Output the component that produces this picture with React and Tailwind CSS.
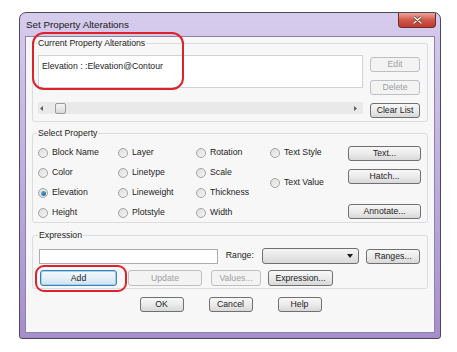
import React from "react";

const Btn = ({ children, disabled = false, focused = false, className = "" }) => {
    let look = "border-[#707070] bg-gradient-to-b from-[#f7f7f7] via-[#ebebeb] to-[#d8d8d8] text-[#1c1c1c]";
    if (disabled) look = "border-[#bcc0c3] bg-[#f3f3f3] text-[#a0a0a0]";
    if (focused) look = "border-[#3b80b6] bg-gradient-to-b from-[#f4f9fc] via-[#e4eff7] to-[#cfe2ef] text-[#1c1c1c] shadow-[inset_0_0_0_1px_#9fd3f1]";
    return (
        <div className={`flex h-[15px] shrink-0 items-center justify-center rounded-[3px] border leading-none ${look} ${className}`}>
            {children}
        </div>
    );
};

const Radio = ({ label, checked = false, className = "" }) => (
    <div className={`flex items-center gap-[4px] ${className}`}>
        <div className="flex h-[10px] w-[10px] shrink-0 items-center justify-center rounded-full border border-[#a3a3a3] bg-gradient-to-br from-[#dcdcdc] to-[#f6f6f6]">
            {checked && <div className="h-[5px] w-[5px] rounded-full bg-gradient-to-br from-[#6fb4e3] to-[#1d5a8c]" />}
        </div>
        <span className="whitespace-nowrap">{label}</span>
    </div>
);

const Group = ({ title, className = "", children }) => (
    <fieldset className={`min-w-0 rounded-[3px] border border-[#d9dde2] ${className}`}>
        <legend className="ml-[-1px] px-[1px] leading-[10px] text-[#1c1c1c]">{title}</legend>
        {children}
    </fieldset>
);

const Arrow = ({ dir }) => (
    <svg width="3" height="5" viewBox="0 0 3 5" className="shrink-0">
        {dir === "left" ? <polygon points="3,0 3,5 0,2.5" fill="#606060" /> : <polygon points="0,0 0,5 3,2.5" fill="#606060" />}
    </svg>
);

export default function App() {
    return (
        <div className="relative h-[352px] w-[457px] overflow-hidden bg-white font-['Liberation_Sans',Arial,sans-serif] text-[8.7px] text-[#1c1c1c]">
            <div className="ml-[19px] mt-[12px] flex h-[327px] w-[422px] flex-col rounded-t-[7px] rounded-b-[3px] border border-[#4d4858] bg-gradient-to-b from-[#d6ccec] via-[#bfaee0] to-[#a68ece]">
                {/* title bar */}
                <div className="flex h-[23px] shrink-0 items-start">
                    <span className="self-center pl-[6px] pt-[1px] text-[9.8px] text-[#1a1a1a]">Set Property Alterations</span>
                    <div className="ml-auto mr-[4px] flex h-[15px] w-[38px] items-center justify-center rounded-b-[4px] border border-t-0 border-[#6b2c2c] bg-gradient-to-b from-[#e9a697] via-[#d2564a] to-[#c0392f]">
                        <svg width="9" height="8" viewBox="0 0 9 8">
                            <path d="M1 1 L8 7 M8 1 L1 7" stroke="#5a1f1a" strokeWidth="2.6" strokeLinecap="round" />
                            <path d="M1 1 L8 7 M8 1 L1 7" stroke="#ffffff" strokeWidth="1.6" strokeLinecap="round" />
                        </svg>
                    </div>
                </div>

                {/* client area */}
                <div className="mx-[5px] mb-[5px] flex flex-1 flex-col border border-[#8e82ab] bg-[#f7f7f7] px-[6px] pt-[1px]">
                    <Group title="Current Property Alterations" className="pl-[5px] pr-[7px] pt-[7px] pb-[3px]">
                        <div className="flex gap-[7px]">
                            <div className="flex flex-1 flex-col gap-[14px]">
                                <div className="h-[33px] border border-[#cfd2d6] bg-white px-[3px] pt-[4px]">
                                    Elevation : :Elevation@Contour
                                </div>
                                <div className="flex h-[12px] items-center bg-[#e9e9e9] px-[2px]">
                                    <Arrow dir="left" />
                                    <div className="ml-[12px] h-[11px] w-[11px] rounded-[2px] border border-[#9b9b9b] bg-gradient-to-b from-[#f5f5f5] to-[#d9d9d9]" />
                                    <div className="flex-1" />
                                    <Arrow dir="right" />
                                    <div className="w-[4px]" />
                                </div>
                            </div>
                            <div className="mt-[2px] flex w-[50px] flex-col gap-[8px]">
                                <Btn disabled>Edit</Btn>
                                <Btn disabled>Delete</Btn>
                                <Btn>Clear List</Btn>
                            </div>
                        </div>
                    </Group>

                    <Group title="Select Property" className="mt-[6px] pl-[5px] pr-[7px] pt-[6px]">
                        <div className="grid grid-cols-[80px_78px_74px_78px_73px] grid-rows-[18px_18px_18px_18px] gap-y-[2px]">
                            <Radio label="Block Name" />
                            <Radio label="Layer" />
                            <Radio label="Rotation" />
                            <Radio label="Text Style" />
                            <Btn className="mt-[2px] self-start">Text...</Btn>

                            <Radio label="Color" />
                            <Radio label="Linetype" />
                            <Radio label="Scale" />
                            <Radio label="Text Value" className="row-span-2" />
                            <Btn className="row-span-2 mt-[5px] self-start">Hatch...</Btn>

                            <Radio label="Elevation" checked />
                            <Radio label="Lineweight" />
                            <Radio label="Thickness" />

                            <Radio label="Height" />
                            <Radio label="Plotstyle" />
                            <Radio label="Width" />
                            <div />
                            <Btn className="self-start">Annotate...</Btn>
                        </div>
                    </Group>

                    <Group title="Expression" className="mt-[7px] pl-[6px] pr-[7px] pt-[8px] pb-[2px]">
                        <div className="flex h-[16px] items-center">
                            <div className="h-[15px] w-[180px] border border-[#a9acb2] bg-white" />
                            <span className="ml-[8px] w-[36px]">Range:</span>
                            <div className="flex h-[16px] w-[98px] items-center justify-end rounded-[3px] border border-[#707070] bg-gradient-to-b from-[#f4f4f4] to-[#dadada] pr-[5px]">
                                <svg width="6" height="4" viewBox="0 0 6 4">
                                    <polygon points="0,0 6,0 3,4" fill="#1c1c1c" />
                                </svg>
                            </div>
                            <Btn className="ml-[7px] w-[54px]">Ranges...</Btn>
                        </div>
                        <div className="mt-[6px] flex h-[16px] items-center">
                            <Btn focused className="ml-[1px] h-[16px] w-[77px]">Add</Btn>
                            <Btn disabled className="ml-[11px] h-[16px] w-[74px]">Update</Btn>
                            <Btn disabled className="ml-[9px] h-[16px] w-[50px]">Values...</Btn>
                            <Btn className="ml-[7px] h-[16px] w-[65px]">Expression...</Btn>
                        </div>
                    </Group>

                    <div className="mt-[8px] flex justify-center gap-[25px] pl-[1px]">
                        <Btn className="w-[44px]">OK</Btn>
                        <Btn className="w-[44px]">Cancel</Btn>
                        <Btn className="w-[44px]">Help</Btn>
                    </div>
                </div>
            </div>

            {/* red hand-drawn annotations */}
            <div className="absolute left-[32px] top-[32px] h-[58px] w-[152px] rounded-[12px] border-2 border-[#df2129]" />
            <div className="absolute left-[35px] top-[265px] h-[27px] w-[92px] rounded-[9px] border-2 border-[#df2129]" />
        </div>
    );
}
